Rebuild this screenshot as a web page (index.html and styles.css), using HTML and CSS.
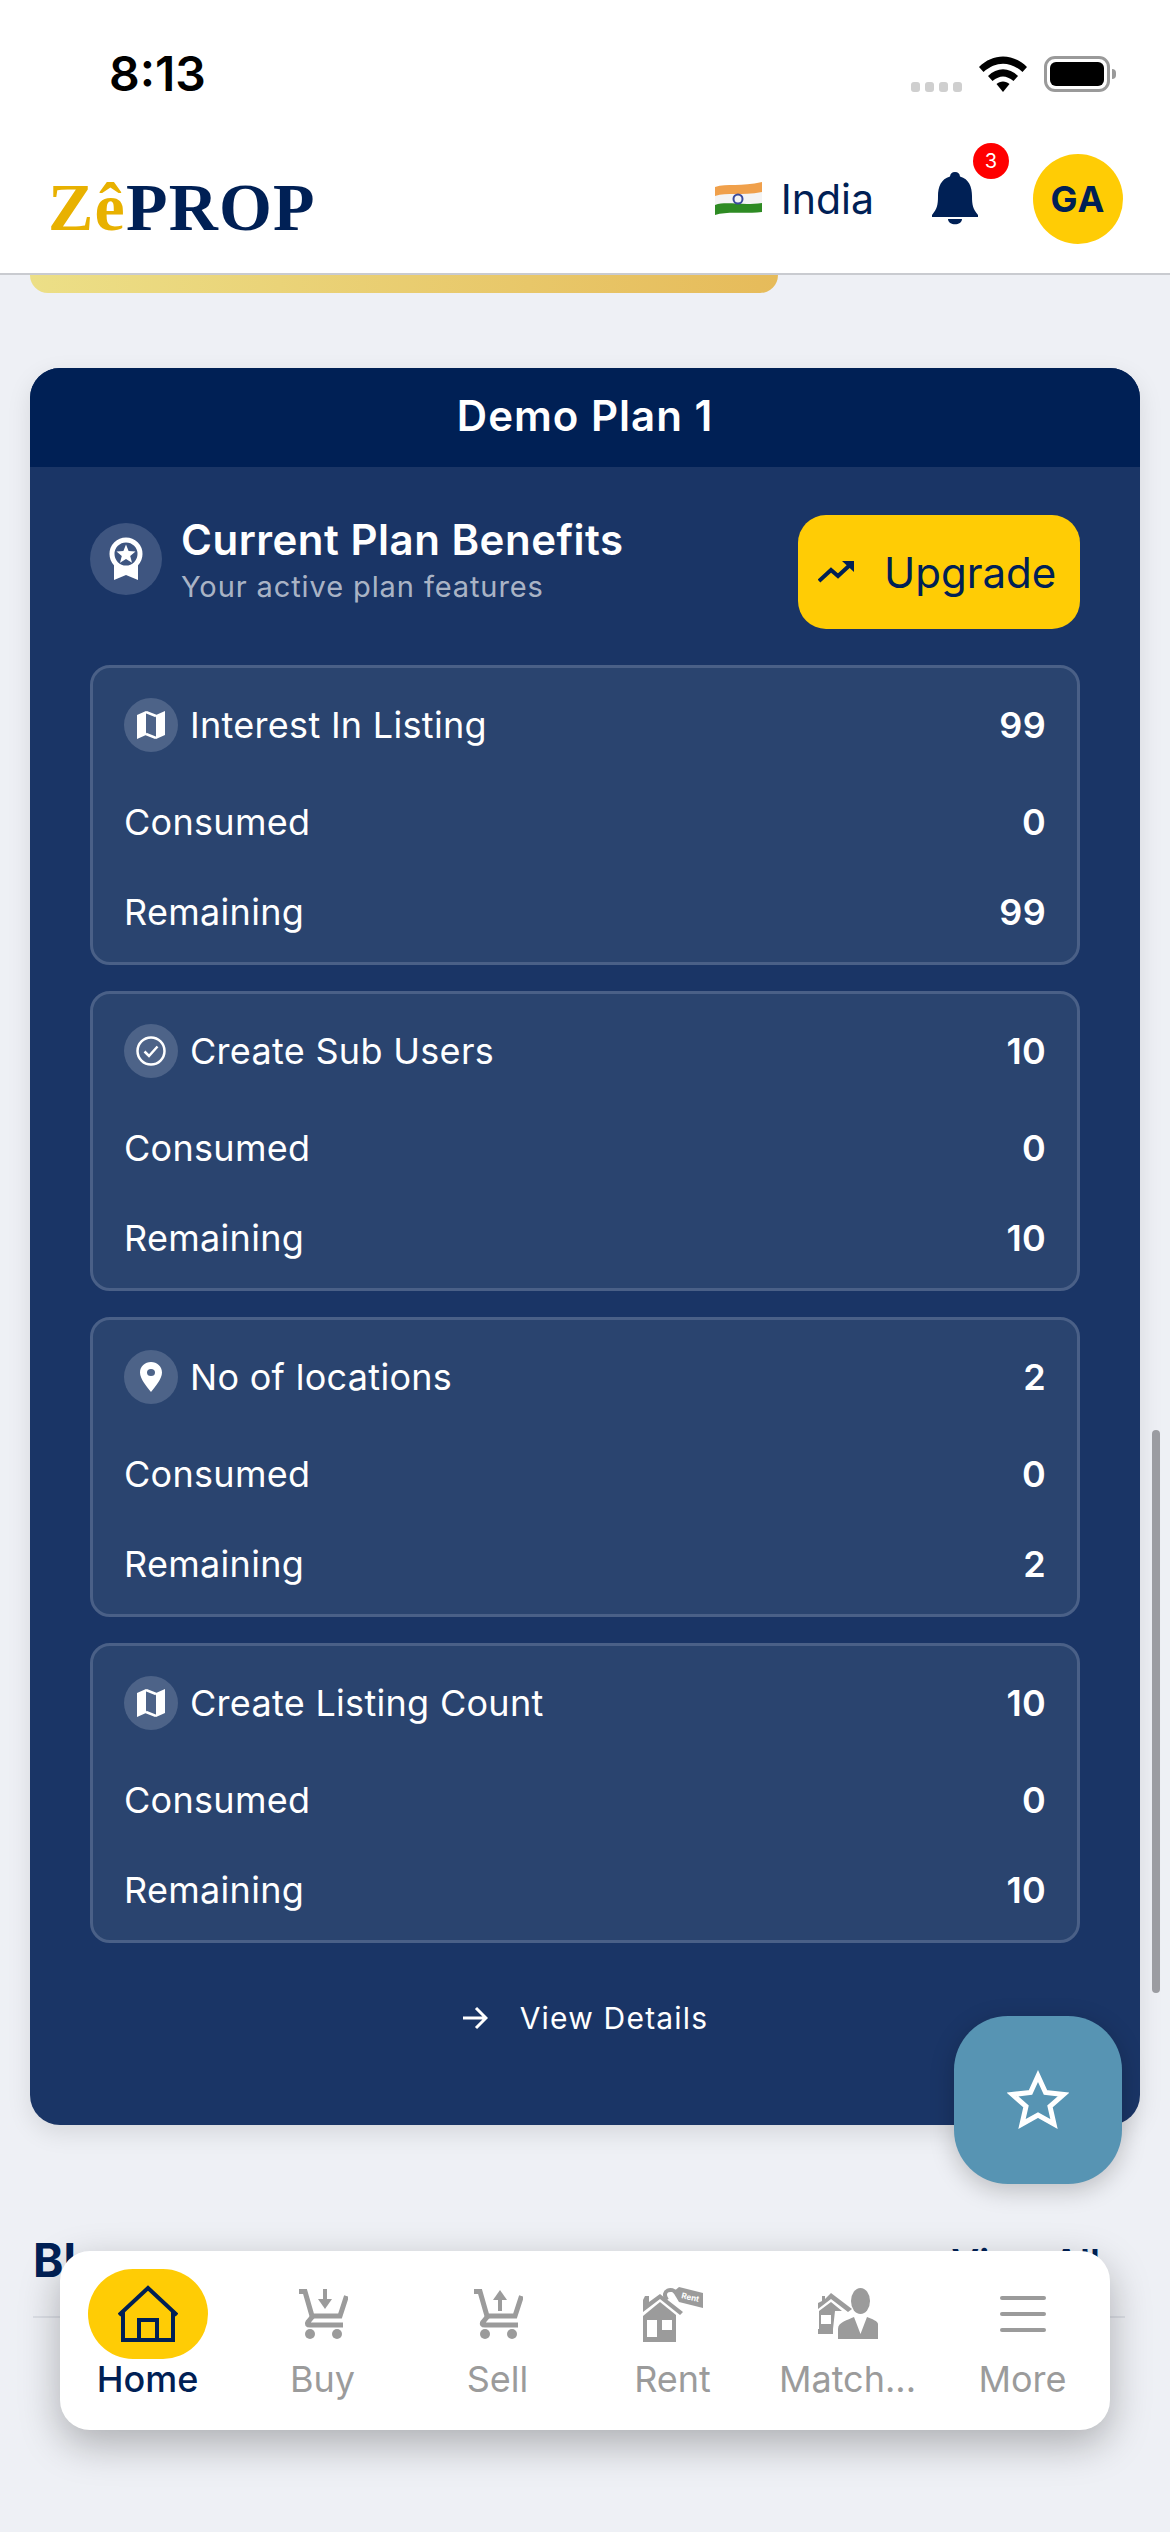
FILE: index.html
```html
<!DOCTYPE html>
<html lang="en">
<head>
  <meta charset="UTF-8" />
  <meta name="viewport" content="width=device-width, initial-scale=1.0" />
  <title>ZêPROP</title>
  <link rel="stylesheet" href="styles.css">
</head>
<body>

  <div class="top">
    <div class="status">
      <span class="time">8:13</span>
      <div class="status-icons">
        <div class="dots"><i></i><i></i><i></i><i></i></div>
        <svg class="wifi" width="48" height="36" viewBox="0 0 48 36">
          <path d="M0 11 C14 -3 34 -3 48 11 L43.500 16 C31 5 17 5 4.500 16Z"/>
          <path d="M9 20 C18 11 30 11 39 20 L34.500 25 C27 19 21 19 13.500 25Z"/>
          <path d="M17.500 28 C21 24.500 27 24.500 30.500 28 L24 36Z"/>
        </svg>
        <div class="battery"><div class="battery-fill"></div></div>
      </div>
    </div>
    <header class="header">
      <div class="logo"><span class="logo-ze">Zê</span>PROP</div>
      <svg class="flag" width="47" height="33" viewBox="0 0 47 33">
        <path class="flag-o" d="M0 5 C12 1 26 5 47 0 V11 C26 15 12 11 0 15Z"/>
        <path class="flag-w" d="M0 14 C12 10 26 14 47 10 V22 C26 25 12 21 0 24Z"/>
        <path class="flag-g" d="M0 23 C12 19 26 24 47 21 V30 C26 32 12 29 0 33Z"/>
        <circle class="flag-c" cx="23" cy="17" r="4.500"/>
      </svg>
      <span class="country">India</span>
      <div class="bell">
        <svg width="46" height="53" viewBox="0 0 46 53">
          <path d="M23 0 A5 5 0 0 1 28 4.500 C37 7 40 15 40 24 C40 33 41 37 46 43 V45 H0 V43 C5 37 6 33 6 24 C6 15 9 7 18 4.500 A5 5 0 0 1 23 0Z"/>
          <path d="M16 47 H30 C30 54 16 54 16 47Z"/>
        </svg>
        <span class="badge">3</span>
      </div>
      <div class="avatar">GA</div>
    </header>
  </div>

  <div class="promo-edge"></div>

  <section class="plan">
    <div class="plan-name">Demo Plan 1</div>
    <div class="plan-body">
      <div class="plan-head">
        <div class="plan-icon">
          <svg width="34" height="44" viewBox="0 0 34 44">
            <path class="white" d="M5 26 V43 L17 38 L29 43 V26Z"/>
            <circle class="ring" cx="17" cy="17" r="14"/>
            <polygon class="white" points="17,7.500 19.600,14 26.500,14.500 21.200,19 23,25.800 17,22 11,25.800 12.800,19 7.500,14.500 14.400,14"/>
          </svg>
        </div>
        <div class="plan-title">
          <h2>Current Plan Benefits</h2>
          <p>Your active plan features</p>
        </div>
        <button class="upgrade">
          <svg width="36" height="22" viewBox="0 0 36 22">
            <path d="M1 20 L13 9 L20 15 L33 3"/>
            <polygon points="24,0 36,0 36,11"/>
          </svg>
          Upgrade
        </button>
      </div>

      <div class="benefit">
        <div class="row">
          <span class="row-icon">
            <svg width="28" height="28" viewBox="0 0 28 28">
              <path class="white" d="M0 4 L9 0 V24 L0 28Z M19 4 L28 0 V24 L19 28Z"/>
              <path class="thin" d="M9 1 L19 5 M9 23 L19 27"/>
            </svg>
          </span>
          <span class="row-label">Interest In Listing</span>
          <b>99</b>
        </div>
        <div class="row row-2"><span>Consumed</span><b>0</b></div>
        <div class="row row-3"><span>Remaining</span><b>99</b></div>
      </div>

      <div class="benefit">
        <div class="row">
          <span class="row-icon">
            <svg width="30" height="30" viewBox="0 0 30 30">
              <circle class="thin" cx="15" cy="15" r="13.500"/>
              <path class="thin" d="M8.500 15.500 L13 20 L21.500 10.500"/>
            </svg>
          </span>
          <span class="row-label">Create Sub Users</span>
          <b>10</b>
        </div>
        <div class="row row-2"><span>Consumed</span><b>0</b></div>
        <div class="row row-3"><span>Remaining</span><b>10</b></div>
      </div>

      <div class="benefit">
        <div class="row">
          <span class="row-icon">
            <svg width="22" height="30" viewBox="0 0 22 30">
              <path class="white" fill-rule="evenodd" d="M11 0 C17 0 22 4.500 22 10.500 C22 17 15 25 11 30 C7 25 0 17 0 10.500 C0 4.500 5 0 11 0Z M11 7 A4 3.500 0 1 0 11 14 A4 3.500 0 1 0 11 7Z"/>
            </svg>
          </span>
          <span class="row-label">No of locations</span>
          <b>2</b>
        </div>
        <div class="row row-2"><span>Consumed</span><b>0</b></div>
        <div class="row row-3"><span>Remaining</span><b>2</b></div>
      </div>

      <div class="benefit">
        <div class="row">
          <span class="row-icon">
            <svg width="28" height="28" viewBox="0 0 28 28">
              <path class="white" d="M0 4 L9 0 V24 L0 28Z M19 4 L28 0 V24 L19 28Z"/>
              <path class="thin" d="M9 1 L19 5 M9 23 L19 27"/>
            </svg>
          </span>
          <span class="row-label">Create Listing Count</span>
          <b>10</b>
        </div>
        <div class="row row-2"><span>Consumed</span><b>0</b></div>
        <div class="row row-3"><span>Remaining</span><b>10</b></div>
      </div>

      <div class="details">
        <svg width="26" height="24" viewBox="0 0 26 24">
          <path d="M1 12 H24 M14 2 L24 12 L14 22"/>
        </svg>
        View Details
      </div>
    </div>
  </section>

  <section class="blogs">
    <div class="blogs-head">
      <h3>Blogs</h3>
      <span>View All</span>
    </div>
  </section>

  <div class="scrollbar"></div>

  <button class="fab">
    <svg width="62" height="60" viewBox="0 0 62 60">
      <polygon points="31,6 38.500,22.500 56.500,24.500 43,36.500 47,54 31,45 15,54 19,36.500 5.500,24.500 23.500,22.500"/>
    </svg>
  </button>

  <nav class="tabs">
    <div class="tab active">
      <div class="tab-icon">
        <svg width="60" height="58" viewBox="0 0 60 58">
          <path d="M1 30 L30 3 L59 30"/>
          <path d="M5 27 V55 H55 V27"/>
          <path d="M21 55 V35 H39 V55"/>
        </svg>
      </div>
      <span>Home</span>
    </div>
    <div class="tab">
      <div class="tab-icon">
        <svg width="50" height="50" viewBox="0 0 50 50">
          <path class="cart" d="M1 2.500 H7 L14 27 H42 L48.500 7"/>
          <path class="cart" d="M15 27 L10 33 Q8 36 12 36 H45"/>
          <circle cx="12" cy="45" r="5"/><circle cx="39" cy="45" r="5"/>
          <path class="cart-thin" d="M27 0 V12"/>
          <polygon points="20,10 34,10 27,20"/>
        </svg>
      </div>
      <span>Buy</span>
    </div>
    <div class="tab">
      <div class="tab-icon">
        <svg width="50" height="50" viewBox="0 0 50 50">
          <path class="cart" d="M1 2.500 H7 L14 27 H42 L48.500 7"/>
          <path class="cart" d="M15 27 L10 33 Q8 36 12 36 H45"/>
          <circle cx="12" cy="45" r="5"/><circle cx="39" cy="45" r="5"/>
          <path class="cart-thin" d="M27 9 V22"/>
          <polygon points="20,11 34,11 27,1"/>
        </svg>
      </div>
      <span>Sell</span>
    </div>
    <div class="tab">
      <div class="tab-icon">
        <svg width="60" height="55" viewBox="0 0 60 55">
          <path d="M2 9 H6 V15 L17 7 L40 25 L37 28 L17 12 L0 25 V13Z"/>
          <path d="M0 29 L17 15 L33 28 V55 H0Z"/>
          <rect class="cut" x="4" y="33" width="10" height="17"/>
          <rect class="cut" x="19" y="33" width="10" height="10"/>
          <path class="cart-thin" d="M24 13 C17 3 30 0 33 6"/>
          <polygon points="30,5 36,0 60,6 60,21 36,15"/>
          <text class="tag" x="38" y="11" transform="rotate(13 38 11)">Rent</text>
        </svg>
      </div>
      <span>Rent</span>
    </div>
    <div class="tab">
      <div class="tab-icon">
        <svg width="60" height="52" viewBox="0 0 60 52">
          <path d="M0 15 L4 13 V8 H7 V11 L13 5 L34 21 L30 24 L13 11 L0 21Z"/>
          <path d="M1 23 L13 14 L24 23 H17 L15 41 V46 H0 V41 H1Z"/>
          <rect class="cut" x="3" y="27" width="10" height="9"/>
          <ellipse cx="42.500" cy="13" rx="9.500" ry="13"/>
          <path d="M20 51 V41 C20 34 30 32 36 29 L42.500 46 L49 29 C54 31 60 33 60 36 V51Z"/>
        </svg>
      </div>
      <span>Match...</span>
    </div>
    <div class="tab">
      <div class="tab-icon">
        <svg width="46" height="36" viewBox="0 0 46 36">
          <rect y="0" width="46" height="4" rx="2"/>
          <rect y="16" width="46" height="4" rx="2"/>
          <rect y="32" width="46" height="4" rx="2"/>
        </svg>
      </div>
      <span>More</span>
    </div>
  </nav>

</body>
</html>
```
FILE: styles.css
```css
* { box-sizing: border-box; }
body { margin: 0; width: 1170px; height: 2532px; overflow: hidden; position: relative; background: #eef0f5; font-family: Inter, "Noto Sans", sans-serif; color: #fff; }
h2, h3, p { margin: 0; }

.top { height: 275px; background: #fff; border-bottom: 2px solid #c9cbd0; position: relative; }
.status { height: 130px; padding: 54px 60px 0 109px; display: flex; justify-content: space-between; align-items: flex-start; color: #000; }
.time { font-size: 48px; line-height: 40px; font-weight: 600; }
.status-icons { display: flex; align-items: flex-end; height: 38px; }
.dots { display: flex; gap: 5px; margin-right: 17px; }
.dots i { width: 9px; height: 10px; border-radius: 3px; background: #cfcfcf; }
.wifi { fill: #000; margin-right: 17px; }
.battery { width: 66px; height: 36px; border: 3px solid #9a9a9a; border-radius: 11px; padding: 3px; position: relative; }
.battery::after { content: ""; position: absolute; right: -9px; top: 10px; width: 4px; height: 10px; background: #9a9a9a; border-radius: 0 4px 4px 0; }
.battery-fill { height: 100%; background: #000; border-radius: 6px; }

.header { height: 143px; padding: 0 47px 6px 48px; display: flex; align-items: center; color: #002055; }
.logo { margin-right: auto; padding-top: 16px; font-family: "Liberation Serif", serif; font-weight: 700; font-size: 68px; line-height: 64px; letter-spacing: 1.2px; color: #002055; }
.logo-ze { color: #e8b100; }
.flag { margin-right: 19px; }
.flag-o { fill: #f0a04b; }
.flag-w { fill: #f4f4f4; }
.flag-g { fill: #2e8b23; }
.flag-c { fill: none; stroke: #3a4a9c; stroke-width: 2; }
.country { font-size: 41px; line-height: 50px; }
.bell { margin-left: 58px; height: 53px; position: relative; }
.bell svg { display: block; fill: #002055; }
.badge { position: absolute; left: 41px; top: -29px; width: 36px; height: 36px; border-radius: 50%; background: #f00; color: #fff; font-size: 20px; line-height: 36px; text-align: center; }
.avatar { margin-left: 55px; width: 90px; height: 90px; border-radius: 50%; background: #ffcc05; font-size: 36px; font-weight: 700; line-height: 90px; text-align: center; letter-spacing: 1px; }

.promo-edge { width: 748px; height: 18px; margin-left: 30px; border-radius: 0 0 24px 24px; background: linear-gradient(90deg, #ecdf87, #e6bb5a); }

.plan { margin: 75px 30px 0; border-radius: 30px; background: #1a3566; box-shadow: 0 8px 24px rgba(0, 0, 0, 0.1); height: 1757px; overflow: hidden; }
.plan-name { height: 99px; background: #002055; font-size: 42px; font-weight: 600; line-height: 96px; text-align: center; letter-spacing: 1px; }
.plan-body { padding: 48px 60px 0; }
.plan-head { display: flex; align-items: flex-start; margin-bottom: 36px; }
.plan-icon { width: 72px; height: 72px; margin: 8px 19px 0 0; border-radius: 50%; background: #3e5580; display: flex; align-items: center; justify-content: center; }
.plan-title { flex: 1; }
.plan-title h2 { font-size: 42px; line-height: 50px; font-weight: 600; letter-spacing: 0.5px; }
.plan-title p { margin-top: 2px; font-size: 29px; line-height: 40px; letter-spacing: 0.9px; color: rgba(255, 255, 255, 0.65); }
.upgrade { width: 282px; height: 114px; padding: 0 0 0 20px; border: none; border-radius: 28px; background: #ffcc05; color: #002055; font-family: inherit; font-size: 42px; display: flex; align-items: center; gap: 30px; }
.upgrade path { fill: none; stroke: #002055; stroke-width: 4; }
.upgrade polygon { fill: #002055; }
.white { fill: #fff; }
.ring { fill: #3e5580; stroke: #fff; stroke-width: 5; }

.benefit { height: 300px; margin-bottom: 26px; padding: 30px 31px 0; border: 3px solid #4a6087; border-radius: 20px; background: #2a446f; font-size: 36px; }
.row { display: flex; align-items: center; justify-content: space-between; height: 48px; letter-spacing: 0.3px; }
.row:first-child { height: 54px; }
.row-2 { margin-top: 46px; }
.row-3 { margin-top: 42px; }
.row b { font-weight: 600; }
.row-icon { width: 54px; height: 54px; margin-right: 12px; border-radius: 50%; background: #4d6388; display: flex; align-items: center; justify-content: center; }
.row-label { flex: 1; }
.thin { fill: none; stroke: #fff; stroke-width: 2.500; }

.details { display: flex; align-items: center; justify-content: center; gap: 32px; margin-top: 55px; font-size: 30px; line-height: 40px; letter-spacing: 1.2px; }
.details path { fill: none; stroke: #fff; stroke-width: 3; }

.blogs { margin: 109px 0 0 45px; width: 1080px; color: #002055; }
.blogs-head { display: flex; justify-content: space-between; align-items: baseline; margin-left: -12px; padding-right: 25px; height: 84px; border-bottom: 2px solid #dcdfe6; }
.blogs-head h3 { font-size: 46px; line-height: 52px; font-weight: 700; }
.blogs-head span { font-size: 38px; font-weight: 600; }

.scrollbar { position: absolute; left: 1152px; top: 1430px; width: 8px; height: 563px; border-radius: 4px; background: #9b9ca1; }

.fab { position: absolute; left: 954px; top: 2016px; width: 168px; height: 168px; padding: 0; border: none; border-radius: 54px; background: #5794b3; box-shadow: 0 6px 24px rgba(0, 0, 0, 0.22); display: flex; align-items: center; justify-content: center; }
.fab polygon { fill: none; stroke: #fff; stroke-width: 5; }

.tabs { position: absolute; left: 60px; top: 2251px; width: 1050px; height: 179px; border-radius: 30px; background: #fff; box-shadow: 0 14px 40px rgba(0, 0, 0, 0.28); display: grid; grid-template-columns: repeat(6, 1fr); padding-top: 18px; }
.tab { display: flex; flex-direction: column; align-items: center; color: #9b9b9b; font-size: 36px; fill: #9b9b9b; }
.tab-icon { width: 120px; height: 90px; border-radius: 45px; display: flex; align-items: center; justify-content: center; }
.tab span { line-height: 40px; white-space: nowrap; }
.tab.active { color: #002055; font-weight: 500; }
.tab.active .tab-icon { background: #ffcc05; }
.tab.active path { fill: none; stroke: #002055; stroke-width: 4; }
.cart { fill: none; stroke: #9b9b9b; stroke-width: 5; }
.cart-thin { fill: none; stroke: #9b9b9b; stroke-width: 4; }
.cut { fill: #fff; }
.tag { fill: #fff; font-size: 8px; font-weight: 700; }
```
